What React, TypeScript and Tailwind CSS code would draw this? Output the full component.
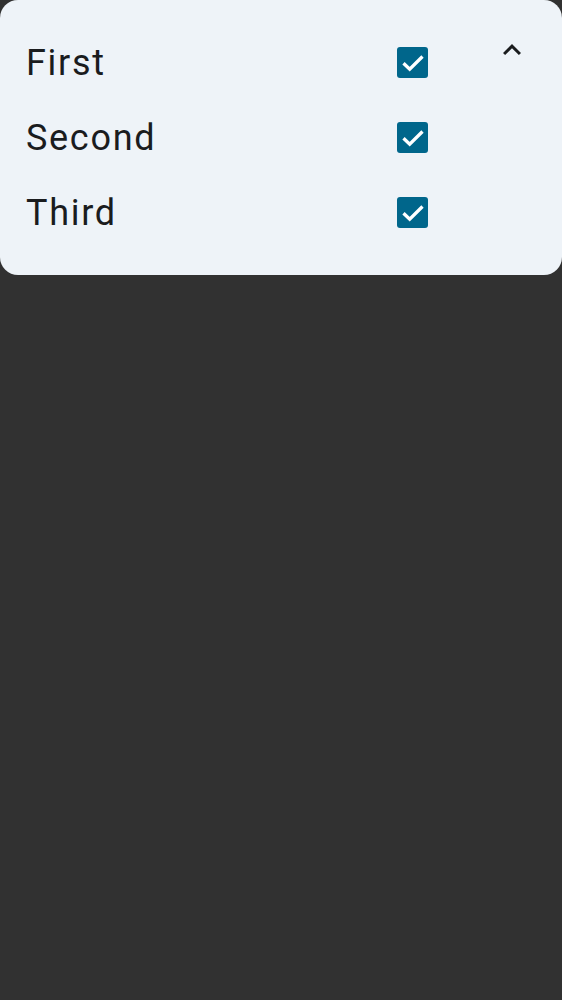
import React from "react";

const Check = () => (
  <div className="w-[31px] h-[31px] rounded-[3px] bg-[#00668b] flex items-center justify-center">
    <svg width="31" height="31" viewBox="0 0 31 31" fill="none">
      <polyline points="6.5,16.2 12.7,22.2 25.5,9.5" stroke="#ffffff" strokeWidth="3.3" strokeLinecap="butt" strokeLinejoin="miter" fill="none" />
    </svg>
  </div>
);

export default function App() {
  const items = ["First", "Second", "Third"];
  return (
    <div className="w-[562px] h-[1000px] bg-[#313131]" style={{ fontFamily: "Roboto, 'Noto Sans', sans-serif" }}>
      <div className="bg-[#eef3f8] rounded-b-[18px] rounded-t-[18px] flex items-start pt-[25px] pb-[25px]">
        <div className="flex flex-col w-[428px] pl-[26px]">
          {items.map((t) => (
            <div key={t} className="h-[75px] flex items-center justify-between">
              <span className="text-[36px] leading-none tracking-[1.7px] text-[#1a1c1e]">{t}</span>
              <Check />
            </div>
          ))}
        </div>
        <div className="ml-[66px] mt-[7px]">
          <svg width="36" height="36" viewBox="0 0 24 24" fill="#1a1c1e">
            <path d="M12 8l-6 6 1.41 1.41L12 10.83l4.59 4.58L18 14z" />
          </svg>
        </div>
      </div>
    </div>
  );
}
